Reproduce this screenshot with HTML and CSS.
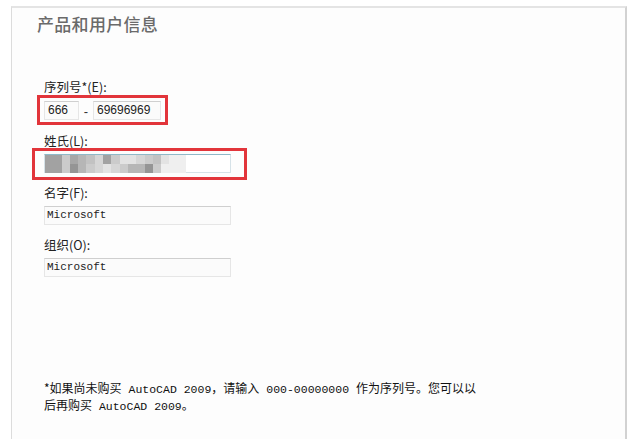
FILE: index.html
```html
<!DOCTYPE html>
<html lang="zh-CN">
<head>
<meta charset="utf-8">
<title>产品和用户信息</title>
<link rel="stylesheet" href="styles.css">
</head>
<body>
<div class="panel">
  <h1 class="title">产品和用户信息</h1>
  <div class="form">
    <div class="field">
      <div class="label">序列号*(E):</div>
      <div class="serial">
        <div class="box w-short">666</div>
        <span class="dash">-</span>
        <div class="box w-mid">69696969</div>
      </div>
      <div class="mark mark-serial"></div>
    </div>
    <div class="field">
      <div class="label">姓氏(L):</div>
      <div class="box w-long focus">
        <div class="mosaic">
          <i class="s3"></i><i class="s3"></i><i class="s6"></i><i class="s2"></i><i class="s4"></i><i class="s5"></i><i class="s7"></i><i class="s3"></i><i class="s6"></i><i class="s8"></i><i class="s8"></i><i class="s7"></i><i class="s6"></i><i class="s5"></i><i class="s8"></i><i class="s9"></i><i class="s9"></i>
          <i class="s3"></i><i class="s3"></i><i class="s6"></i><i class="s1"></i><i class="s4"></i><i class="s6"></i><i class="s7"></i><i class="s8"></i><i class="s7"></i><i class="s6"></i><i class="s4"></i><i class="s4"></i><i class="s1"></i><i class="s6"></i><i class="s9"></i><i class="s9"></i><i class="s9"></i>
        </div>
      </div>
      <div class="mark mark-name"></div>
    </div>
    <div class="field">
      <div class="label">名字(F):</div>
      <div class="box w-long mono">Microsoft</div>
    </div>
    <div class="field">
      <div class="label">组织(O):</div>
      <div class="box w-long mono">Microsoft</div>
    </div>
    <p class="note">*如果尚未购买<span class="en"> AutoCAD 2009</span>，请输入<span class="en"> 000-00000000 </span>作为序列号。您可以以后再购买<span class="en"> AutoCAD 2009</span>。</p>
  </div>
</div>
</body>
</html>
```
FILE: styles.css
```css
* { box-sizing: border-box; }
html, body { margin: 0; padding: 0; background: #ffffff; overflow: hidden; }
body { font-family: "Noto Sans CJK SC", "Liberation Sans", sans-serif; color: #222; }

.panel {
  margin: 6px 0 0 11px;
  width: 616px;
  height: 440px;
  border-top: 2px solid #e4e4e4;
  border-left: 1px solid #dcdcdc;
  border-right: 2px solid #d2d2d2;
  background: #fdfdfd;
  padding: 6px 0 0 25px;
}

.title {
  margin: 0;
  font-size: 17px;
  line-height: 20px;
  font-weight: 500;
  color: #6a6a6a;
  letter-spacing: 0.3px;
}

.form {
  margin: 45px 0 0 7px;
}

.field {
  position: relative;
  margin-bottom: 12px;
}

.label {
  font-size: 12.5px;
  line-height: 16px;
  height: 16px;
  margin-bottom: 5px;
  color: #222;
}

.serial {
  display: flex;
  align-items: center;
}

.box {
  height: 19px;
  border: 1px solid #e6e6e6;
  border-top-color: #cfcfcf;
  background: #fbfbfb;
  font-family: "Liberation Sans", sans-serif;
  font-size: 12px;
  line-height: 17px;
  padding-left: 3px;
  color: #222;
  white-space: nowrap;
}
.w-short { width: 35px; }
.w-mid { width: 68px; }
.w-long { width: 187px; }

.dash {
  width: 14px;
  text-align: center;
  font-family: "Liberation Sans", sans-serif;
  font-size: 13px;
  line-height: 19px;
  padding-top: 2px;
  color: #333;
}

.mono {
  font-family: "Liberation Mono", monospace;
  font-size: 11px;
  padding-left: 2px;
}

.focus {
  border-color: #d6e2e8;
  border-top-color: #8fb9c9;
  padding: 0;
  background: #ffffff;
}

.mosaic {
  display: grid;
  grid-template-columns: repeat(17, 8.3px);
  grid-template-rows: 9px 9px;
  width: 141px;
}
.mosaic i { display: block; }
.s1 { background: #959595; }
.s2 { background: #a7a7a7; }
.s3 { background: #a2a2a2; }
.s4 { background: #b6b6b6; }
.s5 { background: #c2c2c2; }
.s6 { background: #cbcbcb; }
.s7 { background: #d6d6d6; }
.s8 { background: #e3e3e3; }
.s9 { background: #efefef; }

.mark {
  position: absolute;
  border: 3px solid #e2353b;
  pointer-events: none;
}
.mark-serial {
  left: -7px;
  top: 16px;
  width: 131px;
  height: 30px;
}
.mark-name {
  left: -12px;
  top: 15px;
  width: 215px;
  height: 32px;
}

.note {
  margin: 103px 0 0 0;
  width: 440px;
  font-size: 12px;
  line-height: 15px;
  color: #111;
}
.note .en {
  font-family: "Liberation Mono", monospace;
  font-size: 11.5px;
  line-height: 15px;
}
```
